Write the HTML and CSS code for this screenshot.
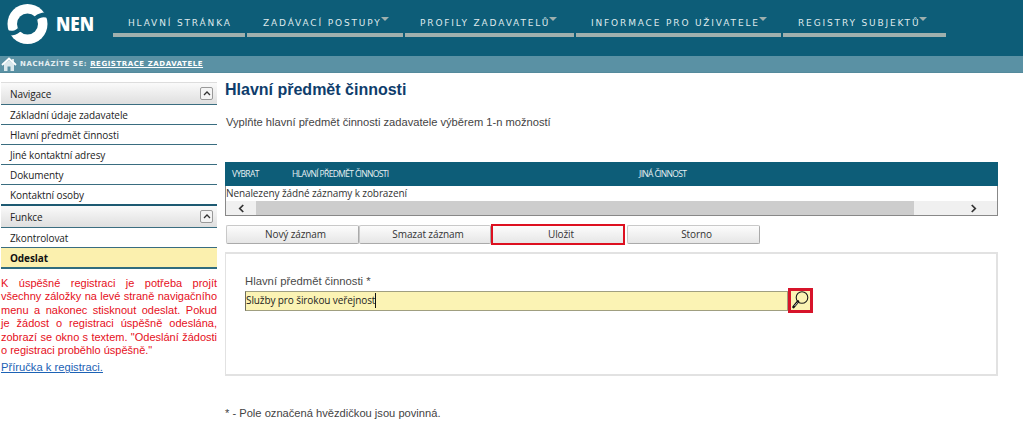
FILE: index.html
```html
<!DOCTYPE html>
<html lang="cs">
<head>
<meta charset="utf-8">
<title>NEN</title>
<link rel="stylesheet" href="styles.css">
</head>
<body>
<header class="top">
  <a class="logo" href="#">
    <svg class="logo-mark" viewBox="0 0 42 42" width="42" height="42"><circle cx="20.500" cy="21" r="20" fill="#fff"/><circle cx="20.500" cy="21" r="10.500" fill="#0d5d78"/><path fill="#0d5d78" d="M27.500 13.500C31 10.500 35 9.500 37 9.500L41 12.500L41 15C37 13.500 33 14 30 17Z"/><path fill="#0d5d78" transform="rotate(180 20.500 21)" d="M27.500 13.500C31 10.500 35 9.500 37 9.500L41 12.500L41 15C37 13.500 33 14 30 17Z"/></svg>
    <span class="logo-text">NEN</span>
  </a>
  <nav class="menu">
    <a class="menu-item w1" href="#">HLAVNÍ STRÁNKA</a>
    <a class="menu-item w2 drop" href="#">ZADÁVACÍ POSTUPY</a>
    <a class="menu-item w3 drop" href="#">PROFILY ZADAVATELŮ</a>
    <a class="menu-item w4 drop" href="#">INFORMACE PRO UŽIVATELE</a>
    <a class="menu-item w5 drop" href="#">REGISTRY SUBJEKTŮ</a>
  </nav>
</header>
<div class="crumb">
  <svg class="home" viewBox="0 0 16 15" width="16" height="15"><path fill="#dbe8ec" d="M3 7L8 3L13 7V14H9.500V9.500H6.500V14H3Z"/><path d="M1 8L8 1.500L15 8" fill="none" stroke="#fff" stroke-width="1.800"/><path d="M12 2V5" stroke="#fff" stroke-width="1.500"/></svg>
  <span class="crumb-label">NACHÁZÍTE SE:</span>
  <a class="crumb-link" href="#">REGISTRACE ZADAVATELE</a>
</div>
<div class="page">
  <aside class="side">
    <div class="side-head"><span>Navigace</span><span class="collapse"><svg viewBox="0 0 8 5" width="8" height="5"><path d="M1 4L4 1L7 4" fill="none" stroke="#333" stroke-width="1.300"/></svg></span></div>
    <a class="side-item" href="#">Základní údaje zadavatele</a>
    <a class="side-item" href="#">Hlavní předmět činnosti</a>
    <a class="side-item" href="#">Jiné kontaktní adresy</a>
    <a class="side-item" href="#">Dokumenty</a>
    <a class="side-item last" href="#">Kontaktní osoby</a>
    <div class="side-head second"><span>Funkce</span><span class="collapse"><svg viewBox="0 0 8 5" width="8" height="5"><path d="M1 4L4 1L7 4" fill="none" stroke="#333" stroke-width="1.300"/></svg></span></div>
    <a class="side-item" href="#">Zkontrolovat</a>
    <a class="side-item active" href="#">Odeslat</a>
    <p class="note">K úspěšné registraci je potřeba projít všechny záložky na levé straně navigačního menu a nakonec stisknout odeslat. Pokud je&nbsp;žádost o registraci úspěšně odeslána, zobrazí se okno s textem. "Odeslání žádosti o&nbsp;registraci proběhlo úspěšně."</p>
    <a class="guide" href="#">Příručka k registraci.</a>
  </aside>
  <main class="main">
    <h1 class="title">Hlavní předmět činnosti</h1>
    <p class="lead">Vyplňte hlavní předmět činnosti zadavatele výběrem 1-n možností</p>
    <div class="grid">
      <div class="grid-head"><span class="c1">VYBRAT</span><span class="c2">HLAVNÍ PŘEDMĚT ČINNOSTI</span><span>JINÁ ČINNOST</span></div>
      <div class="grid-empty">Nenalezeny žádné záznamy k zobrazení</div>
      <div class="scroll">
        <span class="arrow"><svg viewBox="0 0 8 10" width="7" height="9"><path d="M6 1L2 5L6 9" fill="none" stroke="#333" stroke-width="2"/></svg></span>
        <span class="thumb"></span>
        <span class="arrow end"><svg viewBox="0 0 8 10" width="7" height="9"><path d="M2 1L6 5L2 9" fill="none" stroke="#333" stroke-width="2"/></svg></span>
      </div>
    </div>
    <div class="actions">
      <button class="btn b1" type="button">Nový záznam</button>
      <button class="btn b2" type="button">Smazat záznam</button>
      <button class="btn b3 marked" type="button">Uložit</button>
      <button class="btn b4" type="button">Storno</button>
    </div>
    <section class="panel">
      <label class="field-label">Hlavní předmět činnosti *</label>
      <div class="field">
        <div class="input"><span>Služby pro širokou veřejnost</span><i class="caret"></i></div>
        <button class="search" type="button"><svg viewBox="0 0 19 19" width="19" height="19"><circle cx="11" cy="6.500" r="5.800" fill="#fbf3b4" stroke="#1c1c1c" stroke-width="1.100"/><path d="M7 10.500L2.500 16" stroke="#111" stroke-width="2.600" stroke-linecap="round"/><path d="M6.500 11.500L3.500 15" stroke="#eee" stroke-width=".8"/></svg></button>
      </div>
    </section>
    <p class="foot">* - Pole označená hvězdičkou jsou povinná.</p>
  </main>
</div>
</body>
</html>
```
FILE: styles.css
```css
* { box-sizing: border-box; }
html, body { margin: 0; padding: 0; background: #fff; }
body { width: 1023px; height: 425px; overflow: hidden; font-family: "Liberation Sans", Arial, sans-serif; color: #444; }
a { text-decoration: none; color: inherit; }

.top { height: 56px; background: #0d5d78; display: flex; align-items: flex-start; }
.logo { display: flex; width: 113px; flex: none; padding: 3px 0 0 7px; color: #fff; }
.logo-mark { flex: none; }
.logo-text { font: 800 20px/1 "Open Sans", sans-serif; margin: 11px 0 0 7px; transform: scaleX(.86); transform-origin: left center; }
.menu { display: flex; gap: 2px; padding-top: 15px; }
.menu-item { display: block; height: 22px; padding: 1px 0 0 15px; border-bottom: 4px solid #9fb0ae; color: #dfe9ec; font: 9px/14px "DejaVu Sans", sans-serif; letter-spacing: 1.850px; white-space: nowrap; }
.w1 { width: 132px; }
.w2 { width: 156px; padding-left: 16px; }
.w3 { width: 169px; }
.w4 { width: 205px; }
.w5 { width: 163px; }
.drop::after { content: ""; display: inline-block; vertical-align: 5px; margin-left: -1px; border: 4px solid transparent; border-top-color: #9fb0ae; border-bottom-width: 0; }

.crumb { height: 17px; background: #5a91a4; border-bottom: 1px solid #548a9c; display: flex; align-items: center; padding-left: 1px; color: #e4eef1; font: bold 7px/1 "DejaVu Sans", sans-serif; letter-spacing: .550px; }
.home { flex: none; margin-right: 3px; }
.crumb-link { margin-left: 3px; color: #fff; text-decoration: underline; }

.page { display: flex; align-items: flex-start; padding: 9px 0 0 1px; }
.side { width: 216px; flex: none; font: 10px/20px "Open Sans", sans-serif; letter-spacing: -.1px; color: #222; }
.side-head { height: 23px; display: flex; justify-content: space-between; align-items: center; padding: 0 4px 0 9px; background: linear-gradient(#fafafa, #dfdfdf); border-top: 1px solid #ddd; border-bottom: 1px solid #3a6d80; }
.side-head.second { height: 22px; border-top: 0; }
.collapse { width: 13px; height: 13px; display: flex; align-items: center; justify-content: center; border: 1px solid #999; border-radius: 2px; background: #f4f4f4; }
.collapse svg { display: block; }
.side-item { display: block; height: 20px; padding-left: 9px; border-bottom: 1px solid #3a6d80; }
.side-item.last { height: 21px; border-bottom: 2px solid #1d5a72; }
.side-item.active { background: #fbf0ae; font-weight: 700; color: #111; height: 21px; border-bottom: 2px solid #2f6c7f; }
.note { margin: 8px 0 0; color: #e60f22; font: 11px/13.400px "Liberation Sans", sans-serif; letter-spacing: 0; text-align: justify; }
.guide { display: block; margin-top: 3px; font: 11.200px/14px "Liberation Sans", sans-serif; letter-spacing: 0; color: #1c62b5; text-decoration: underline; }

.main { width: 773px; flex: none; margin-left: 8px; }
.title { margin: -1px 0 0; font: bold 16px/18px "Liberation Sans", sans-serif; color: #0e3d6c; }
.lead { margin: 16px 0 0 1px; font: 11.150px/14px "Liberation Sans", sans-serif; color: #444; }
.grid { margin-top: 33px; border: 1px solid #888; border-top: 0; }
.grid-head { height: 24px; margin: 0 -1px; background: #0d5d78; color: #e8f0f3; display: flex; align-items: center; padding-left: 7px; font: 8.500px/1 "Open Sans", sans-serif; letter-spacing: -.65px; }
.c1 { width: 60px; }
.c2 { width: 347px; }
.grid-empty { height: 15px; font: 10px/15px "Open Sans", sans-serif; letter-spacing: -.1px; color: #333; }
.scroll { height: 14px; display: flex; background: #f0f0f0; }
.arrow { width: 30px; flex: none; display: flex; align-items: center; justify-content: center; }
.thumb { flex: 1; background: #cdcdcd; }
.arrow.end { width: 83px; padding-left: 36px; }
.actions { display: flex; margin-top: 9px; }
.btn { height: 19px; padding: 0 0 0 6px; border: 1px solid #c9c9c9; border-bottom-color: #aaa; border-right-color: #aaa; border-radius: 2px; background: linear-gradient(#fcfcfc, #e6e6e6); font: 10px/15px "Open Sans", sans-serif; letter-spacing: -.1px; color: #333; }
.b1 { width: 133px; margin-left: 1px; }
.b2 { width: 132px; }
.b3 { width: 132px; margin-left: 1px; }
.b4 { width: 133px; margin-left: 3px; }
.marked { outline: 2px solid #dd1020; outline-offset: -1px; border-color: transparent; border-radius: 0; }
.panel { height: 124px; margin-top: 8px; padding: 20px 0 0 20px; border: 1px solid #e2e2e2; border-width: 2px 2px 2px 1px; }
.field-label { display: block; margin-left: -1px; font: 11.300px/14px "Liberation Sans", sans-serif; color: #4a4a4a; }
.field { display: flex; align-items: center; height: 25px; margin-left: -1px; }
.input { width: 543px; height: 20px; display: flex; align-items: center; background: #fbf3b4; border: 1px solid #a09f80; border-left-color: #6c6c5c; font: 10px/15px "Open Sans", sans-serif; letter-spacing: -.1px; color: #222; }
.caret { width: 1px; height: 15px; background: #111; }
.search { width: 25px; height: 25px; padding: 0; margin: 0; display: flex; align-items: center; justify-content: center; background: #fbf3b4; border: 3px solid #d7142a; }
.foot { margin: 30px 0 0; font: 11.150px/14px "Liberation Sans", sans-serif; color: #444; }
```
